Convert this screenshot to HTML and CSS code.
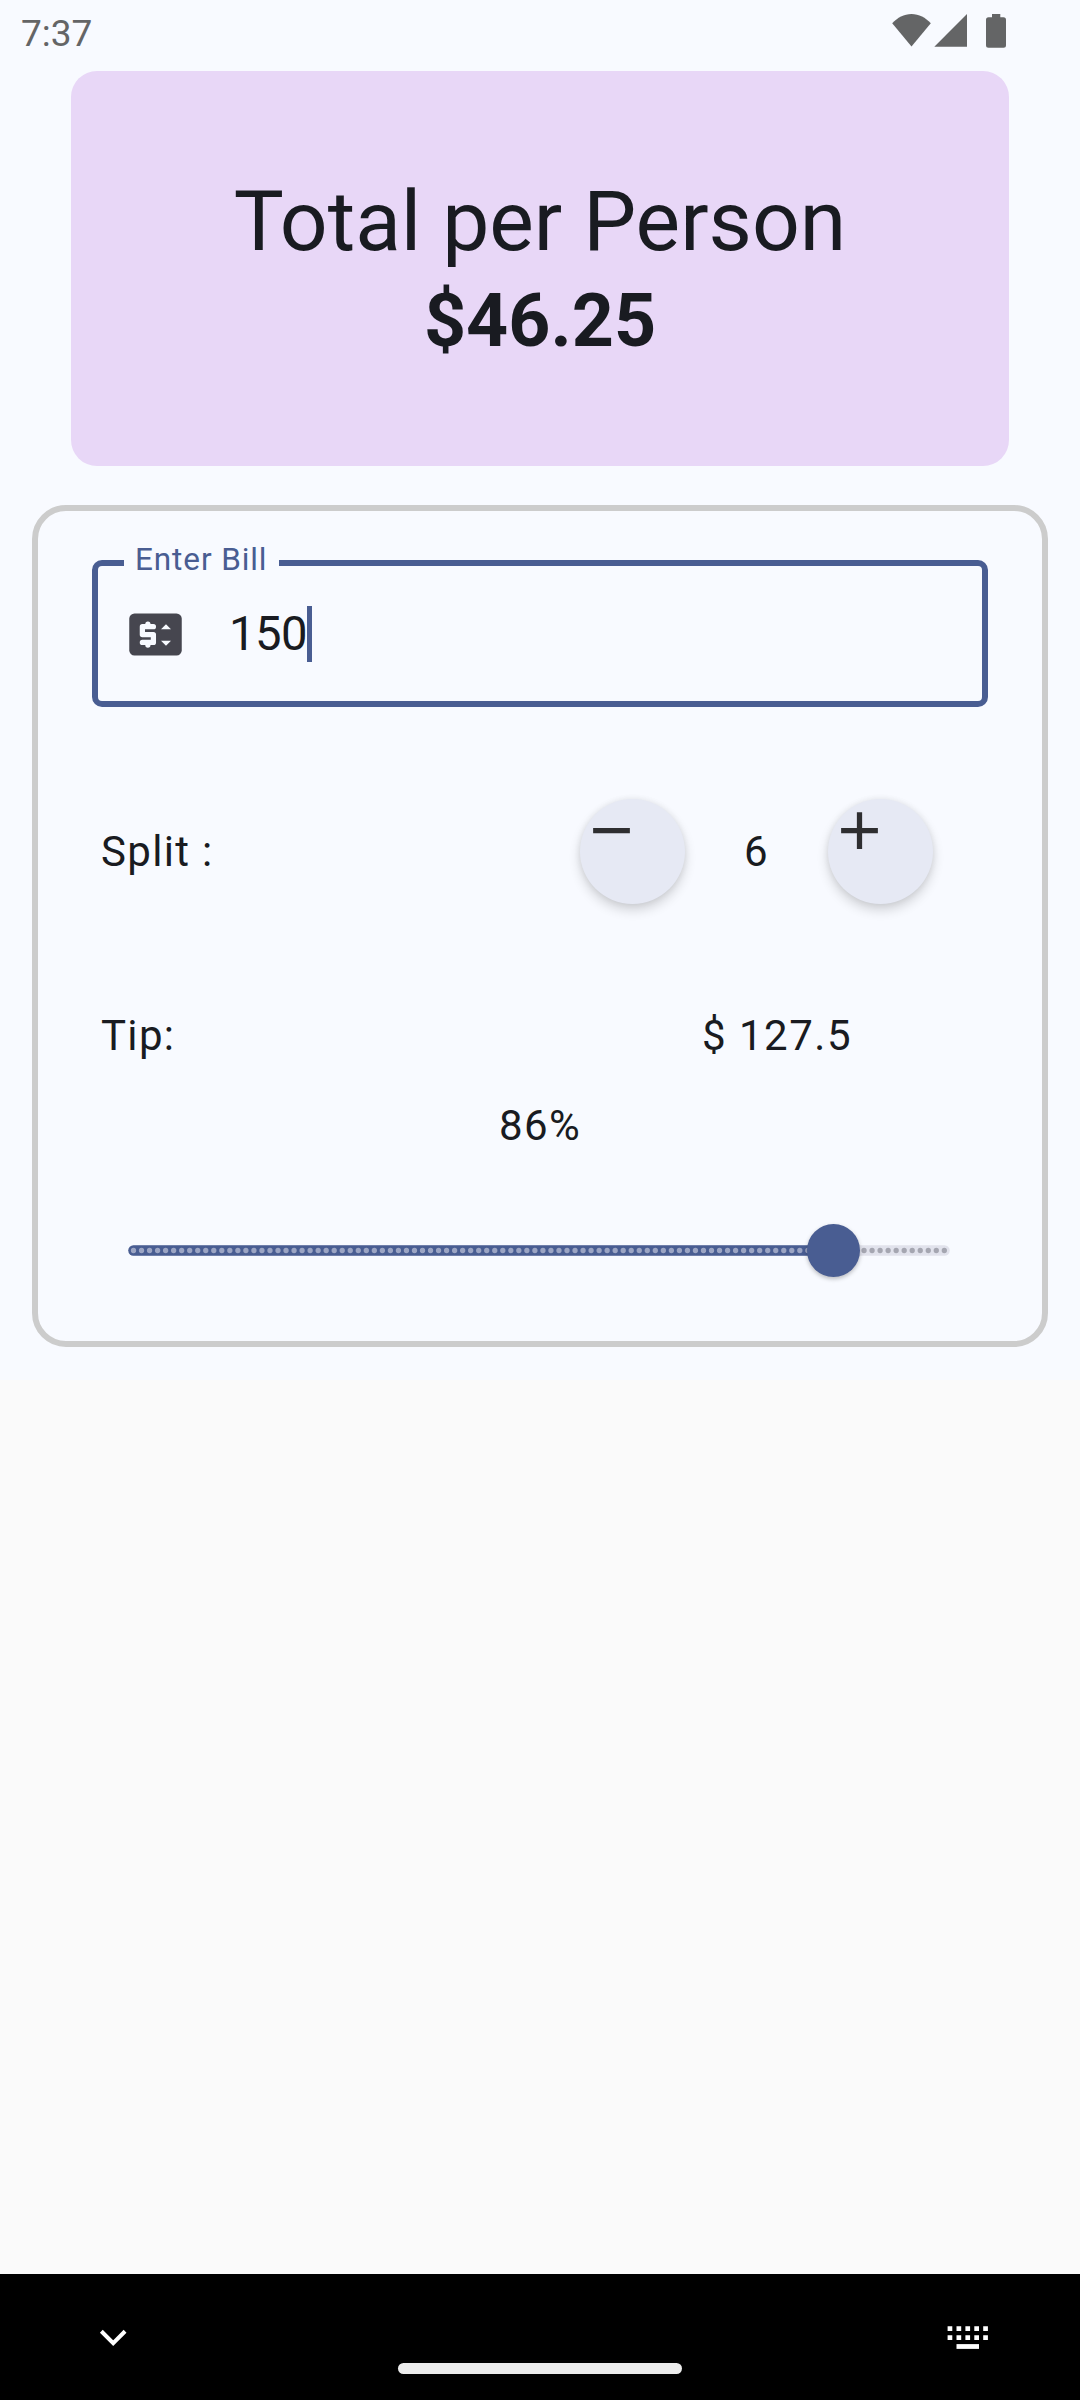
FILE: index.html
```html
<!DOCTYPE html>
<html lang="en">
<head>
<meta charset="utf-8">
<title>Tip Calculator</title>
<link rel="stylesheet" href="styles.css">
</head>
<body>
<div class="screen">
  <div class="surface">
    <header class="status">
      <span class="clock">7:37</span>
      <svg class="status-icons" width="116" height="36" viewBox="0 0 116 36" fill="#646566">
        <path d="M.2 9.300C5.500 3.500 12 0 19.500 0S33.500 3.500 38.800 9.300L19.500 32.500z"/>
        <path d="M42.300 32.700H75V0z"/>
        <path d="M100 0h8.300v3.300h3.200a2.500 2.500 0 0 1 2.500 2.500v25.500a2.500 2.500 0 0 1-2.500 2.500H96.500a2.500 2.500 0 0 1-2.500-2.500V5.800a2.500 2.500 0 0 1 2.500-2.500h3.500z"/>
      </svg>
    </header>

    <section class="total">
      <h1 class="total-title">Total per Person</h1>
      <p class="total-amount">$46.25</p>
    </section>

    <main class="bill">
      <div class="field">
        <label class="field-label">Enter Bill</label>
        <svg class="field-icon" width="63" height="63" viewBox="0 0 24 24">
          <rect x="2" y="4" width="20" height="16" rx="2" fill="#46464f"/>
          <path fill="#f8faff" d="M12.200 9a1 1 0 0 1-1 1H8v1h3.200a1 1 0 0 1 1 1v3a1 1 0 0 1-1 1h-1.100a1 1 0 0 1-2 0H7a1 1 0 0 1 0-2h3.200v-1H7a1 1 0 0 1-1-1V9a1 1 0 0 1 1-1h1.100a1 1 0 0 1 2 0h1.100a1 1 0 0 1 1 1zM14.100 10 16 8.100 17.900 10zM14.100 14.400 16 16.300 17.900 14.400z"/>
        </svg>
        <span class="field-value">150</span>
        <span class="cursor"></span>
      </div>

      <div class="row split">
        <span class="row-label">Split :</span>
        <div class="stepper">
          <button class="round" aria-label="Decrease">
            <svg width="63" height="63" viewBox="0 0 24 24"><path fill="#2e2e30" d="M5 11h14v2H5z"/></svg>
          </button>
          <span class="count">6</span>
          <button class="round" aria-label="Increase">
            <svg width="63" height="63" viewBox="0 0 24 24"><path fill="#2e2e30" d="M19 13h-6v6h-2v-6H5v-2h6V5h2v6h6z"/></svg>
          </button>
        </div>
      </div>

      <div class="row tip">
        <span class="row-label">Tip:</span>
        <span class="tip-amount">$ 127.5</span>
      </div>

      <p class="percent">86%</p>

      <div class="slider">
        <svg class="track" width="822" height="11" viewBox="0 0 822 11" fill="none" stroke-linecap="round">
          <path d="M5.500 5.500H816.500" stroke="#e1e2ec" stroke-width="10.500"/>
          <path d="M5.500 5.500H704.500" stroke="#495d92" stroke-width="10.500"/>
          <path d="M5.500 5.500H700" stroke="#9ba4c3" stroke-width="5.300" stroke-dasharray="0 8.028"/>
          <path d="M728.020 5.500H817.500" stroke="#a5a6b1" stroke-width="5.300" stroke-dasharray="0 8.028"/>
        </svg>
        <span class="thumb"></span>
      </div>
    </main>
  </div>

  <footer class="nav">
    <svg class="nav-down" width="28" height="18" viewBox="0 0 28 18"><path d="M1.500 1.700 14 14.200 26.500 1.700" transform="translate(.9 .6) scale(.95)" fill="none" stroke="#fff" stroke-width="4.200"/></svg>
    <span class="nav-home"></span>
    <svg class="nav-keys" width="42" height="24" viewBox="0 0 42 24" fill="none" stroke="#fff" stroke-width="4.800">
      <path d="M.6 2.700H42M.6 11.600H42" stroke-dasharray="4.700 4.200"/>
      <path d="M9.500 20.500H32"/>
    </svg>
  </footer>
</div>
</body>
</html>
```

FILE: styles.css
```css
* { box-sizing: border-box; }

body {
  margin: 0;
  background: #fafafa;
  color: #191b21;
  font-family: Roboto, "Liberation Sans", sans-serif;
}

h1, p { margin: 0; font-weight: 400; }
svg { display: block; }

.screen {
  width: 1080px;
  height: 2400px;
  display: flex;
  flex-direction: column;
  justify-content: space-between;
}

.surface {
  height: 1380px;
  background: #f8faff;
}

.status {
  height: 71px;
  padding: 14px 72px 0 21px;
  display: flex;
  justify-content: space-between;
}

.clock {
  font-size: 37px;
  line-height: 39px;
  color: #646566;
}

.total {
  height: 395px;
  margin: 0 71px;
  padding-top: 1px;
  border-radius: 26px;
  background: #e8d7f7;
  display: flex;
  flex-direction: column;
  align-items: center;
  justify-content: center;
}

.total-title { font-size: 84px; line-height: 105px; }
.total-amount { font-size: 73.5px; line-height: 94.5px; font-weight: 700; }

.bill {
  height: 842px;
  margin: 39px 32px 0;
  padding: 49px 54px 0;
  border: 6px solid #ccc;
  border-radius: 34px;
}

.field {
  position: relative;
  width: 896px;
  height: 147px;
  padding: 1px 0 0 26px;
  border: 6px solid #495d92;
  border-radius: 10px;
  display: flex;
  align-items: center;
}

.field-label {
  position: absolute;
  left: 26px;
  top: -27px;
  width: 155px;
  padding-left: 11px;
  background: #f8faff;
  color: #495d92;
  font-size: 31.5px;
  line-height: 42px;
  letter-spacing: .9px;
}

.field-value {
  margin-left: 42px;
  font-size: 47.25px;
  line-height: 63px;
  letter-spacing: -.5px;
}

.cursor {
  width: 5px;
  height: 56px;
  background: #495d92;
}

.row {
  display: flex;
  justify-content: space-between;
  align-items: center;
  padding-left: 9px;
  font-size: 42px;
  line-height: 63px;
  letter-spacing: 1.31px;
}

.split { height: 106px; margin-top: 91px; padding-right: 55px; }

.stepper { display: flex; align-items: center; }

.count { width: 143px; text-align: center; }

.round {
  width: 105px;
  height: 105px;
  padding: 0;
  border: 0;
  border-radius: 50%;
  background: #e6e9f4;
  box-shadow: 0 6px 12px rgba(0, 0, 0, .16), 0 0 6px rgba(0, 0, 0, .07);
  display: flex;
  align-items: flex-start;
}

.tip { height: 63px; margin-top: 100px; padding-right: 136px; }
.tip-amount { letter-spacing: 1.5px; }

.percent {
  margin-top: 27px;
  text-align: center;
  font-size: 42px;
  line-height: 63px;
  letter-spacing: 1.31px;
}

.slider {
  position: relative;
  height: 54px;
  margin-top: 66px;
  padding-left: 36px;
  display: flex;
  align-items: center;
}

.thumb {
  position: absolute;
  left: 715px;
  top: 1px;
  width: 53px;
  height: 53px;
  border-radius: 50%;
  background: #495d92;
  box-shadow: 0 2px 4px rgba(0, 0, 0, .25);
}

.nav {
  height: 126px;
  padding: 0 91px 0 99px;
  background: #000;
  display: flex;
  justify-content: space-between;
}

.nav-down { margin-top: 55px; }
.nav-keys { margin-top: 52px; }

.nav-home {
  width: 284px;
  height: 11px;
  margin: 89px 0 0 6px;
  border-radius: 6px;
  background: #ececec;
}
```
